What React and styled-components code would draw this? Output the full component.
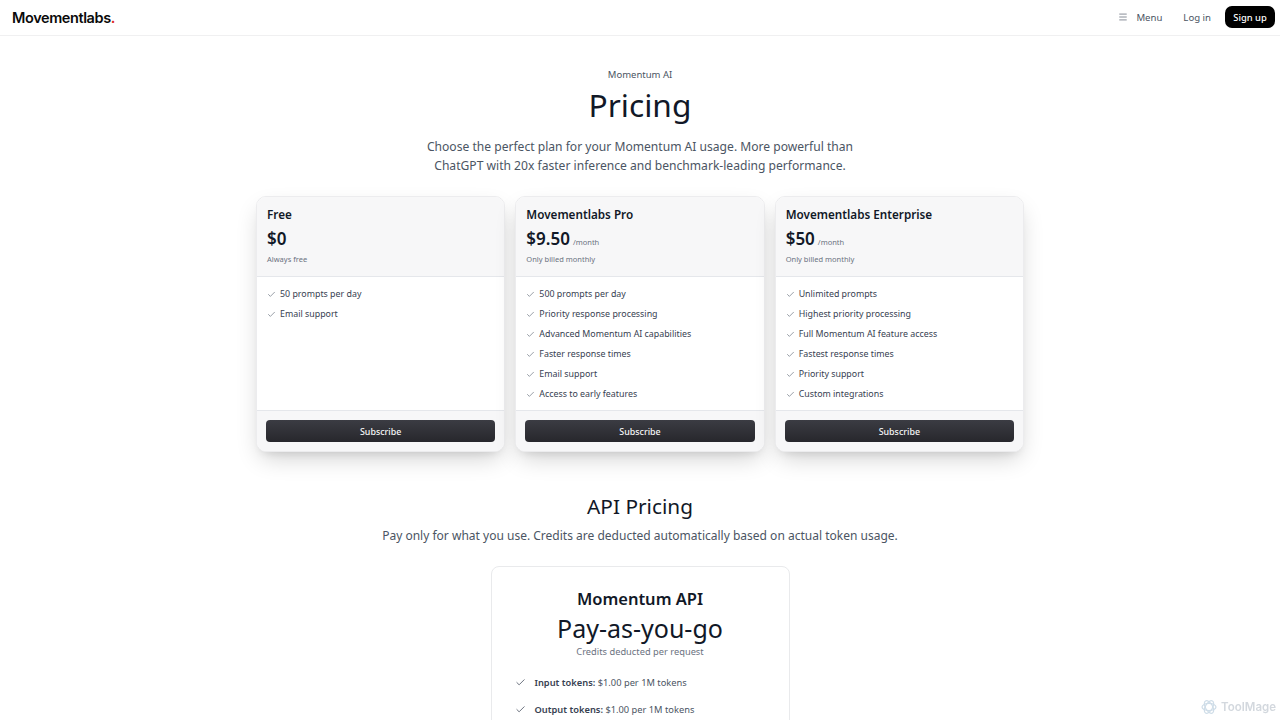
import styled, { createGlobalStyle } from "styled-components";
import { Check, Menu } from "lucide-react";

const GlobalStyle = createGlobalStyle`
  html, body {
    margin: 0;
    padding: 0;
    height: 720px;
    overflow: hidden;
    background: #fff;
    font-family: "Noto Sans", "Open Sans", sans-serif;
    color: #111827;
  }
  * { box-sizing: border-box; }
`;

const Nav = styled.header`
  height: 36px;
  border-bottom: 1px solid #f0f0f1;
  display: flex;
  align-items: center;
  justify-content: space-between;
  padding: 0 5px 1px 12px;
`;

const Logo = styled.div`
  font-family: Inter, sans-serif;
  font-size: 14.5px;
  font-weight: 600;
  letter-spacing: -0.4px;
  color: #0a0a0a;
  span { color: #dc2626; }
`;

const NavRight = styled.nav`
  display: flex;
  align-items: center;
`;

const NavLink = styled.a`
  display: flex;
  align-items: center;
  gap: 8px;
  font-size: 9.6px;
  color: #4b5563;
  margin-right: ${(p) => p.$mr}px;
`;

const SignUp = styled.button`
  height: 22px;
  width: 50px;
  border: 0;
  padding: 0;
  border-radius: 7px;
  background: #000;
  color: #fff;
  font: 500 9.4px "Noto Sans", sans-serif;
`;

const Hero = styled.section`
  display: flex;
  flex-direction: column;
  align-items: center;
  padding-top: 32px;
`;

const Eyebrow = styled.div`
  font-size: 9.5px;
  line-height: 14px;
  color: #4b5563;
`;

const Title = styled.h1`
  margin: 1px 0 0;
  font-size: 31.7px;
  line-height: 44px;
  font-weight: 400;
  color: #111827;
`;

const Lead = styled.p`
  margin: 10px 0 0;
  width: 480px;
  text-align: center;
  font-size: 12.1px;
  line-height: 19px;
  color: #4b5563;
`;

const Plans = styled.div`
  display: grid;
  grid-template-columns: repeat(3, 1fr);
  gap: 10px;
  width: 768px;
  margin: 21px auto 0;
`;

const Card = styled.article`
  height: 256px;
  display: flex;
  flex-direction: column;
  border-radius: 10px;
  border: 1px solid #ececee;
  background: #fff;
  overflow: hidden;
  box-shadow: 0 10px 24px -5px rgba(0, 0, 0, 0.2), 0 6px 10px -6px rgba(0, 0, 0, 0.12);
`;

const CardHead = styled.div`
  height: 80px;
  flex: none;
  padding: 9px 10px 0;
  background: #f7f7f8;
  border-bottom: 1px solid #e5e7eb;
`;

const PlanName = styled.h3`
  margin: 0;
  font-size: 11.7px;
  line-height: 16px;
  font-weight: 600;
  color: #111827;
`;

const PriceRow = styled.div`
  display: flex;
  align-items: baseline;
  gap: 3px;
  margin-top: 5px;
  height: 24px;
`;

const Price = styled.span`
  font-size: 17px;
  line-height: 24px;
  font-weight: 600;
  color: #111827;
`;

const Period = styled.span`
  font-size: 7.5px;
  color: #6b7280;
`;

const Note = styled.div`
  margin-top: 3px;
  font-size: 7.5px;
  line-height: 11px;
  color: #6b7280;
`;

const Features = styled.ul`
  flex: 1;
  list-style: none;
  margin: 0;
  padding: 7px 10px 0;
`;

const Feature = styled.li`
  display: flex;
  align-items: center;
  gap: 4px;
  height: 20px;
  font-size: 8.85px;
  color: #374151;
  svg { color: #4b5563; flex: none; }
`;

const CardFoot = styled.div`
  height: 41px;
  flex: none;
  padding: 9px 9px 0;
  background: #f7f7f8;
  border-top: 1px solid #e5e7eb;
`;

const Subscribe = styled.button`
  display: block;
  width: 100%;
  height: 22px;
  padding: 0;
  border: 0;
  border-radius: 4px;
  background: linear-gradient(#3b3c43, #27272c);
  color: #f4f4f5;
  font: 500 8.9px "Noto Sans", sans-serif;
`;

const ApiSection = styled.section`
  display: flex;
  flex-direction: column;
  align-items: center;
  margin-top: 39px;
`;

const ApiTitle = styled.h2`
  margin: 0;
  font-size: 20.8px;
  line-height: 30px;
  font-weight: 400;
  color: #111827;
`;

const ApiLead = styled.p`
  margin: 5px 0 0;
  font-size: 12.03px;
  line-height: 19px;
  color: #4b5563;
`;

const ApiCard = styled.div`
  width: 299px;
  height: 200px;
  margin-top: 21px;
  padding: 21px 23px 0;
  border: 1px solid #e9eaec;
  border-radius: 8px;
  text-align: center;
`;

const ApiName = styled.h3`
  margin: 0;
  font-size: 16.5px;
  line-height: 22px;
  font-weight: 600;
  color: #111827;
`;

const ApiPrice = styled.div`
  margin-top: 1px;
  font-size: 25px;
  line-height: 34px;
  color: #111827;
`;

const ApiNote = styled.div`
  margin-top: 2px;
  font-size: 9.3px;
  line-height: 10px;
  color: #6b7280;
`;

const ApiList = styled.ul`
  list-style: none;
  margin: 12px 0 0;
  padding: 0;
`;

const ApiItem = styled.li`
  display: flex;
  align-items: center;
  gap: 9px;
  height: 27px;
  text-align: left;
  font-size: 9.3px;
  color: #4b5563;
  b { font-weight: 600; color: #374151; }
  svg { color: #374151; flex: none; }
`;

const Watermark = styled.div`
  position: fixed;
  right: 4px;
  bottom: 5px;
  display: flex;
  align-items: center;
  gap: 4px;
  font-family: Inter, sans-serif;
  font-size: 11.5px;
  font-weight: 600;
  color: #d3d8de;
`;

const plans = [
  {
    name: "Free",
    price: "$0",
    note: "Always free",
    features: ["50 prompts per day", "Email support"],
  },
  {
    name: "Movementlabs Pro",
    price: "$9.50",
    period: "/month",
    note: "Only billed monthly",
    features: [
      "500 prompts per day",
      "Priority response processing",
      "Advanced Momentum AI capabilities",
      "Faster response times",
      "Email support",
      "Access to early features",
    ],
  },
  {
    name: "Movementlabs Enterprise",
    price: "$50",
    period: "/month",
    note: "Only billed monthly",
    features: [
      "Unlimited prompts",
      "Highest priority processing",
      "Full Momentum AI feature access",
      "Fastest response times",
      "Priority support",
      "Custom integrations",
    ],
  },
];

function PlanCard({ plan }) {
  return (
    <Card>
      <CardHead>
        <PlanName>{plan.name}</PlanName>
        <PriceRow>
          <Price>{plan.price}</Price>
          {plan.period && <Period>{plan.period}</Period>}
        </PriceRow>
        <Note>{plan.note}</Note>
      </CardHead>
      <Features>
        {plan.features.map((f) => (
          <Feature key={f}>
            <Check size={9} strokeWidth={1.5} />
            {f}
          </Feature>
        ))}
      </Features>
      <CardFoot>
        <Subscribe>Subscribe</Subscribe>
      </CardFoot>
    </Card>
  );
}

function WatermarkIcon() {
  return (
    <svg width="16" height="16" viewBox="0 0 16 16" fill="none" stroke="#cfdde8" strokeWidth="1.2">
      <ellipse cx="8" cy="8" rx="7" ry="3.6" />
      <ellipse cx="8" cy="8" rx="7" ry="3.6" transform="rotate(60 8 8)" />
      <ellipse cx="8" cy="8" rx="7" ry="3.6" transform="rotate(120 8 8)" />
    </svg>
  );
}

export default function App() {
  return (
    <>
      <GlobalStyle />
      <Nav>
        <Logo>
          Movementlabs<span>.</span>
        </Logo>
        <NavRight>
          <NavLink $mr={21}>
            <Menu size={10} strokeWidth={1.6} />
            Menu
          </NavLink>
          <NavLink $mr={14}>Log in</NavLink>
          <SignUp>Sign up</SignUp>
        </NavRight>
      </Nav>
      <Hero>
        <Eyebrow>Momentum AI</Eyebrow>
        <Title>Pricing</Title>
        <Lead>
          Choose the perfect plan for your Momentum AI usage. More powerful than
          <br />
          ChatGPT with 20x faster inference and benchmark-leading performance.
        </Lead>
      </Hero>
      <Plans>
        {plans.map((p) => (
          <PlanCard key={p.name} plan={p} />
        ))}
      </Plans>
      <ApiSection>
        <ApiTitle>API Pricing</ApiTitle>
        <ApiLead>Pay only for what you use. Credits are deducted automatically based on actual token usage.</ApiLead>
        <ApiCard>
          <ApiName>Momentum API</ApiName>
          <ApiPrice>Pay-as-you-go</ApiPrice>
          <ApiNote>Credits deducted per request</ApiNote>
          <ApiList>
            <ApiItem>
              <Check size={11} strokeWidth={1.6} />
              <span>
                <b>Input tokens:</b> $1.00 per 1M tokens
              </span>
            </ApiItem>
            <ApiItem>
              <Check size={11} strokeWidth={1.6} />
              <span>
                <b>Output tokens:</b> $1.00 per 1M tokens
              </span>
            </ApiItem>
          </ApiList>
        </ApiCard>
      </ApiSection>
      <Watermark>
        <WatermarkIcon />
        ToolMage
      </Watermark>
    </>
  );
}
